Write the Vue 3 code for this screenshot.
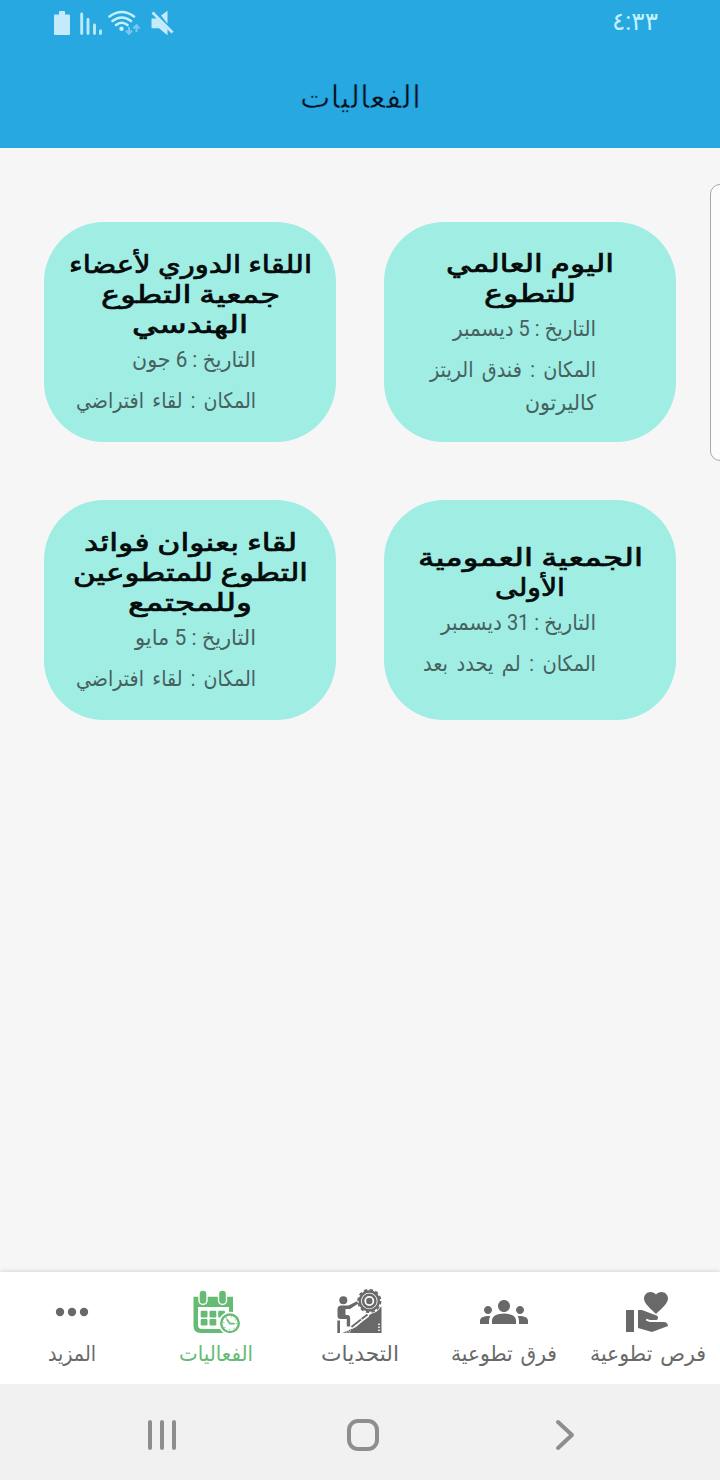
<script setup>
const cards = [
  {
    title: [['اليوم العالمي', 168], ['للتطوع', 92]],
    date: [['التاريخ : 5 ديسمبر', 143]],
    place: [['المكان : فندق الريتز', 166], ['كاليرتون', 71]],
  },
  {
    title: [['اللقاء الدوري لأعضاء', 243], ['جمعية التطوع', 179], ['الهندسي', 116]],
    date: [['التاريخ : 6 جون', 124]],
    place: [['المكان : لقاء افتراضي', 180]],
  },
  {
    title: [['الجمعية العمومية', 225], ['الأولى', 70]],
    date: [['التاريخ : 31 ديسمبر', 155]],
    place: [['المكان : لم يحدد بعد', 173]],
  },
  {
    title: [['لقاء بعنوان فوائد', 213], ['التطوع للمتطوعين', 235], ['وللمجتمع', 124]],
    date: [['التاريخ : 5 مايو', 121]],
    place: [['المكان : لقاء افتراضي', 180]],
  },
]

const tabs = [
  { id: 'chances', label: 'فرص تطوعية', width: 116 },
  { id: 'teams', label: 'فرق تطوعية', width: 106 },
  { id: 'challenges', label: 'التحديات', width: 78 },
  { id: 'events', label: 'الفعاليات', width: 74, active: true },
  { id: 'more', label: 'المزيد', width: 48 },
]
</script>

<template>
  <div class="screen" dir="rtl" lang="ar">
    <header class="top">
      <div class="status">
        <svg class="clock" width="46" height="40"><text x="46" y="30" textLength="46" lengthAdjust="spacingAndGlyphs">٤:٣٣</text></svg>
        <svg class="status-icons" width="124" height="30" viewBox="52 8 124 30">
          <path d="M54 15.500q0-1 1-1h4V12q0-1 1-1h4q1 0 1 1v2.500h4q1 0 1 1V34q0 1-1 1H55q-1 0-1-1z" fill="#c5eafb" />
          <path d="M81.700 14v19.500M88 19.500v14M94.500 25v8.500M100.500 31v2.500" stroke="#bdeaf8" stroke-width="2.900" stroke-linecap="round" />
          <g fill="none" stroke="#c5f1fc" stroke-width="2.600" stroke-linecap="round">
            <path d="M109.500 16.500Q121.700 7.500 134 16.500M112.500 21Q121.700 14 131 21M116 25Q121.700 20.500 127.500 25" />
          </g>
          <circle cx="121.500" cy="28.800" r="2.200" fill="#c5f1fc" />
          <path d="M129 27v6M126 30.500l3 3.300 3-3.300M136.500 32v-6M133.500 28.500l3-3.300 3 3.300" fill="none" stroke="#79c9ee" stroke-width="2" />
          <path d="M151.500 18.500h5.500l10.500 10.500v6.300l-8.500-7h-7.500zM161 15.500l6.500-4.700v13z" fill="#c5eafb" />
          <path d="M152.500 12.500l20 20" stroke="#c5eafb" stroke-width="2.600" />
        </svg>
      </div>
      <h1 class="page-title">
        <svg width="121" height="50"><text x="121" y="35.500" textLength="121" lengthAdjust="spacingAndGlyphs">الفعاليات</text></svg>
      </h1>
    </header>

    <main class="content">
      <article v-for="(card, i) in cards" :key="i" class="card">
        <h2 class="title">
          <svg v-for="[text, w] in card.title" :key="text" :width="w" height="30">
            <text :x="w" y="22.500" :textLength="w" lengthAdjust="spacingAndGlyphs">{{ text }}</text>
          </svg>
        </h2>
        <div class="details">
          <p v-for="(lines, j) in [card.date, card.place]" :key="j" class="detail" :class="{ place: j === 1 }">
            <svg v-for="[text, w] in lines" :key="text" :width="w" height="33">
              <text :x="w" y="27" :textLength="w" lengthAdjust="spacingAndGlyphs">{{ text }}</text>
            </svg>
          </p>
        </div>
      </article>
    </main>

    <nav class="tabs">
      <div v-for="tab in tabs" :key="tab.id" class="tab" :class="{ active: tab.active }">
        <svg v-if="tab.id === 'chances'" width="48" height="48" viewBox="0 0 24 24" fill="currentColor">
          <path d="M1 11h4v11H1V11zm15-7.750C16.650 2.490 17.660 2 18.700 2 20.550 2 22 3.450 22 5.300c0 2.270-2.910 4.900-6 7.700-3.090-2.810-6-5.440-6-7.700C10 3.450 11.450 2 13.300 2c1.040 0 2.050.49 2.700 1.250zM20 17h-7l-2.090-.73.33-.94L13 16h2.820c.65 0 1.180-.53 1.180-1.180 0-.49-.31-.93-.77-1.110L8.970 11H7v9.020L14 22l8.010-3C22 17.900 21.110 17 20 17z" />
        </svg>
        <svg v-else-if="tab.id === 'teams'" width="48" height="48" viewBox="0 0 24 24" fill="currentColor">
          <path d="M12 12.750c1.630 0 3.070.39 4.240.9 1.080.48 1.760 1.560 1.760 2.730V18H6v-1.610c0-1.180.68-2.260 1.760-2.730 1.170-.52 2.610-.91 4.240-.91zM4 13c1.100 0 2-.9 2-2s-.9-2-2-2-2 .9-2 2 .9 2 2 2zm1.130 1.100c-.37-.06-.74-.1-1.130-.1-.99 0-1.930.21-2.780.58C.48 14.900 0 15.620 0 16.430V18h4.500v-1.610c0-.83.23-1.610.63-2.290zM20 13c1.100 0 2-.9 2-2s-.9-2-2-2-2 .9-2 2 .9 2 2 2zm4 3.430c0-.81-.48-1.530-1.220-1.850-.85-.37-1.790-.58-2.780-.58-.39 0-.76.04-1.130.1.4.68.63 1.460.63 2.290V18H24v-1.570zM12 6c1.660 0 3 1.340 3 3s-1.340 3-3 3-3-1.340-3-3 1.340-3 3-3z" />
        </svg>
        <svg v-else-if="tab.id === 'challenges'" width="48" height="48" viewBox="0 0 48 48" fill="currentColor">
          <path d="M6 45L20 39 41 20.500l4.500-2V45z" />
          <path d="M15 39.500L32 27" stroke="#fff" stroke-width="4" />
          <path d="M15.500 39L31.500 26.500" stroke="currentColor" stroke-width="1.900" stroke-dasharray="12 .8 9" />
          <circle cx="33.300" cy="13" r="12.800" fill="#fff" />
          <circle cx="33.300" cy="13" r="9.500" fill="none" stroke="currentColor" stroke-width="2.400" />
          <circle cx="33.300" cy="13" r="11.200" fill="none" stroke="currentColor" stroke-width="1.800" stroke-dasharray="3.400 2.465" />
          <circle cx="33.300" cy="13" r="6.200" fill="none" stroke="currentColor" stroke-width="2.500" />
          <circle cx="33.300" cy="13" r="3.200" />
          <circle cx="7.300" cy="12.300" r="4" />
          <path d="M1.500 21.500q0-4 4-4h7L21 13.300l1.300 2.200-8.300 5.500H9.500v6h2q2.600 0 2.600 3v8.500h-3.300V31H4.500q-3 0-3-3z" />
          <path d="M1.300 32.500H4V45H1.300z" />
          <path d="M8 42.300h7M6.500 44h9" stroke="#fff" stroke-width=".8" stroke-dasharray="2 1" />
          <path d="M43 35.500v8" stroke="#fff" stroke-width="1.600" stroke-dasharray="1.500 1.500" />
        </svg>
        <svg v-else-if="tab.id === 'events'" width="48" height="48" viewBox="0 0 48 48" fill="currentColor">
          <path d="M1.500 8.700H41V40q0 5-5 5H8.500q-7 0-7-7z" />
          <path d="M6 19h31v18q0 4-3 4H10q-4 0-4-4z" fill="#fff" />
          <g stroke="#fff" stroke-width="1.400">
            <rect x="7" y="2" width="8" height="14.500" rx="4" />
            <rect x="26.500" y="2" width="8" height="14.500" rx="4" />
          </g>
          <rect x="8.700" y="22.800" width="6.800" height="6.600" rx="1" />
          <rect x="17.500" y="22.800" width="6.800" height="6.600" rx="1" />
          <rect x="26.200" y="22.800" width="6.800" height="6.600" rx="1" />
          <rect x="8.700" y="31" width="6.800" height="6.600" rx="1" />
          <rect x="17.500" y="31" width="6.800" height="6.600" rx="1" />
          <circle cx="38" cy="35.300" r="11.500" fill="#fff" />
          <circle cx="38" cy="35.300" r="8.800" fill="none" stroke="currentColor" stroke-width="2.400" />
          <circle cx="38" cy="35.300" r="6.300" fill="none" stroke="currentColor" stroke-width="1.300" stroke-dasharray=".8 4.148" />
          <path d="M34.800 31.300l3.200 4.400h4.500" fill="none" stroke="currentColor" stroke-width="1.800" />
        </svg>
        <svg v-else width="48" height="48" viewBox="0 0 48 48" fill="currentColor">
          <circle cx="12" cy="24" r="4.200" /><circle cx="24" cy="24" r="4.200" /><circle cx="36" cy="24" r="4.200" />
        </svg>
        <svg class="label" :width="tab.width" height="36">
          <text :x="tab.width" y="25" :textLength="tab.width" lengthAdjust="spacingAndGlyphs">{{ tab.label }}</text>
        </svg>
      </div>
    </nav>

    <footer class="system">
      <svg width="30" height="36" viewBox="-6 0 30 36"><path d="M4 5l14 13L4 31" /></svg>
      <svg width="36" height="36" viewBox="0 0 36 36"><rect x="4" y="4" width="28" height="28" rx="9" /></svg>
      <svg width="32" height="36" viewBox="0 0 32 36"><path d="M4 5v26M16 5v26M28 5v26" /></svg>
    </footer>

    <div class="edge-handle"></div>
  </div>
</template>

<style>
body { margin: 0; }
</style>

<style scoped>
.screen {
  position: relative;
  display: flex;
  flex-direction: column;
  width: 720px;
  height: 1480px;
  overflow: hidden;
  background: #f6f6f6;
  font-family: Roboto, "DejaVu Sans", sans-serif;
}
svg { display: block; flex: none; overflow: visible; }
.top { height: 148px; background: #27a8e1; }
.status {
  display: flex;
  justify-content: space-between;
  height: 48px;
  padding: 0 62px 0 52px;
  box-sizing: border-box;
}
.clock { font-size: 25px; fill: #c5f1fc; }
.status-icons { margin-top: 8px; }
.page-title {
  display: flex;
  justify-content: center;
  margin: 0;
  padding-top: 24px;
  font-size: 31px;
  font-weight: 400;
}
.page-title text { fill: #06111a; stroke: #27a8e1; stroke-width: 0.6px; }
.content {
  flex: 1;
  display: grid;
  grid-template-columns: 292px 292px;
  grid-auto-rows: 220px;
  gap: 58px 48px;
  padding: 74px 44px 0;
}
.card {
  display: flex;
  flex-direction: column;
  justify-content: center;
  border-radius: 60px;
  background: #a0ede4;
}
.title {
  display: flex;
  flex-direction: column;
  align-items: center;
  margin: 0;
  font-size: 24.5px;
  font-weight: 400;
  fill: #050a0a;
}
.title text { stroke: #050a0a; stroke-width: 0.7px; }
.details {
  display: flex;
  flex-direction: column;
  gap: 8px;
  padding-right: 80px;
  font-size: 21.5px;
  fill: #46615e;
}
.detail { display: flex; flex-direction: column; align-items: flex-start; margin: 0; }
.place { word-spacing: 4px; }
.tabs {
  display: flex;
  height: 112px;
  background: #fff;
  box-shadow: 0 -1px 4px rgba(0, 0, 0, 0.12);
}
.tab {
  display: flex;
  flex: 1;
  flex-direction: column;
  align-items: center;
  padding-top: 16px;
  color: #696969;
}
.tab.active { color: #66bb74; }
.label { font-size: 21.5px; word-spacing: 3px; fill: currentColor; }
.system {
  display: flex;
  align-items: center;
  justify-content: space-between;
  height: 96px;
  padding: 6px 142px 0 146px;
  box-sizing: border-box;
  background: #f1f1f1;
}
.system svg { fill: none; stroke: #8d8e8e; stroke-width: 4; stroke-linecap: round; stroke-linejoin: round; }
.edge-handle {
  position: absolute;
  top: 184px;
  right: -10px;
  width: 18px;
  height: 275px;
  border: 1px solid #a8a8a8;
  border-radius: 12px;
  background: #fcfcfc;
}
</style>
